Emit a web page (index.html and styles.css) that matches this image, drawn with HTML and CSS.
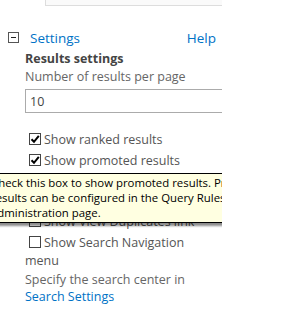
FILE: index.html
```html
<!DOCTYPE html>
<html lang="en">
<head>
    <meta charset="UTF-8">
    <title>Search Results - Settings</title>
    <link rel="stylesheet" href="styles.css">
</head>
<body>
    <div class="panel">
        <div class="search-box"></div>

        <div class="section-head">
            <span class="toggle"></span>
            <a class="section-title" href="#">Settings</a>
            <a class="help" href="#">Help</a>
        </div>

        <div class="section-body">
            <div class="group-title">Results settings</div>
            <div class="field-label">Number of results per page</div>
            <input class="text-input" type="text" value="10">

            <ul class="checks">
                <li><span class="box checked"><svg viewBox="0 0 10 10"><path d="M1.5 5.2 L4 7.8 L8.8 1.8" /></svg></span>Show ranked results</li>
                <li><span class="box checked"><svg viewBox="0 0 10 10"><path d="M1.5 5.2 L4 7.8 L8.8 1.8" /></svg></span>Show promoted results</li>
                <li><span class="box checked"><svg viewBox="0 0 10 10"><path d="M1.5 5.2 L4 7.8 L8.8 1.8" /></svg></span>Show "Did you mean?"</li>
                <li><span class="box"></span>Show personal favorites</li>
                <li><span class="box"></span>Show View Duplicates link</li>
                <li><span class="box"></span>Show Search Navigation menu</li>
            </ul>

            <p class="note">Specify the search center in <a href="#">Search Settings</a></p>
        </div>

        <!-- hover tooltip for "Show promoted results" -->
        <div class="tooltip">
            Check this box to show promoted results. Promoted<br>
            results can be configured in the Query Rules<br>
            administration page.
        </div>
    </div>
</body>
</html>
```

FILE: styles.css
```css
body {
    margin: 0;
    padding: 0;
    background: #ffffff;
    font-family: "Open Sans", "Noto Sans", sans-serif;
    font-size: 12.5px;
    color: #444444;
}
a {
    color: #0072c6;
    text-decoration: none;
}
.panel {
    position: relative;
    width: 222px;
    height: 316px;
    overflow: hidden;
}
.search-box {
    height: 5px;
    margin-left: 45px;
    background: #fafafa;
    border-left: 1px solid #dddddd;
    border-bottom: 1px solid #dddddd;
}
.section-head {
    display: flex;
    align-items: center;
    margin-top: 25px;
    padding: 0 6px 0 8px;
    height: 13px;
}
.toggle {
    position: relative;
    width: 9px;
    height: 9px;
    border: 1px solid #555555;
    margin-right: 11px;
}
.toggle::after {
    content: "";
    position: absolute;
    left: 2px;
    top: 4px;
    width: 5px;
    height: 1px;
    background: #222222;
}
.section-title {
    font-size: 13.5px;
}
.help {
    margin-left: auto;
    font-size: 13.5px;
}
.section-body {
    padding: 6px 6px 0 25px;
    line-height: 18px;
}
.group-title {
    font-weight: bold;
    color: #444444;
}
.field-label {
    color: #666666;
}
.text-input {
    display: block;
    box-sizing: border-box;
    width: 240px;
    height: 24px;
    margin: 3px 0 0;
    padding: 0 4px;
    border: 1px solid #ababab;
    font-family: inherit;
    font-size: 12.5px;
    color: #444444;
    outline: none;
}
.checks {
    list-style: none;
    margin: 17px 0 0;
    padding: 0;
}
.checks li {
    line-height: 20.5px;
    color: #555555;
}
.box {
    display: inline-block;
    box-sizing: border-box;
    width: 12px;
    height: 12px;
    margin: 0 3px 0 4px;
    border: 1px solid #444444;
    vertical-align: -1px;
    background: #ffffff;
}
.box svg {
    display: block;
    width: 10px;
    height: 10px;
}
.box path {
    fill: none;
    stroke: #000000;
    stroke-width: 2;
}
.checks li:last-child {
    line-height: 18px;
    margin-top: 1px;
}
.note {
    margin: 1px 0 0;
    line-height: 17px;
    color: #666666;
}
.tooltip {
    position: absolute;
    left: -14px;
    top: 173px;
    width: 250px;
    padding: 1px 4px 2px;
    background: #ffffe1;
    border: 1px solid #000000;
    box-shadow: 2px 3px 2px rgba(0, 0, 0, 0.45);
    font-size: 11.4px;
    line-height: 15px;
    color: #000000;
    white-space: nowrap;
}
```
